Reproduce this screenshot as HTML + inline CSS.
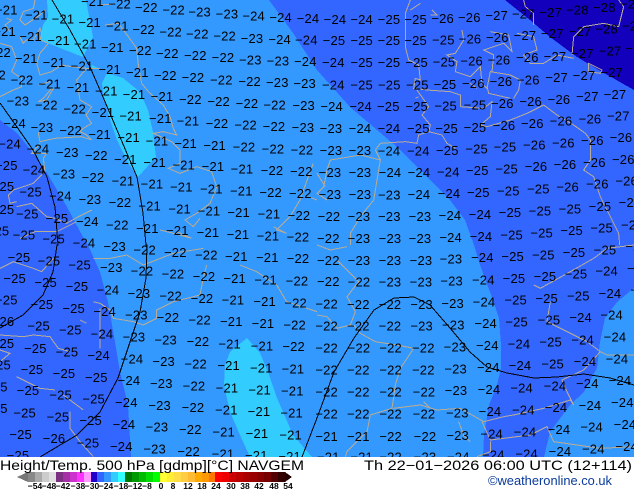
<!DOCTYPE html>
<html><head><meta charset="utf-8"><style>
html,body{margin:0;padding:0;background:#fff}
svg{display:block}
.l text{font:39px "Liberation Sans",sans-serif;letter-spacing:.6px;fill:#000}
.c{fill:none;stroke:#b8ac96;stroke-width:3;shape-rendering:crispEdges}
.k{fill:none;stroke:#000;stroke-width:1;shape-rendering:crispEdges}
.t{font-family:"Liberation Sans",sans-serif;fill:#000}
.b{font:bold 8.5px "Liberation Sans",sans-serif;fill:#000;text-anchor:middle}
</style></head><body>
<svg width="634" height="490" viewBox="0 0 634 490" xmlns="http://www.w3.org/2000/svg">
<defs><clipPath id="m"><rect width="634" height="457"/></clipPath></defs>
<rect width="634" height="490" fill="#fff"/>
<g clip-path="url(#m)">
<rect width="634" height="457" fill="#3399ff"/>
<g shape-rendering="crispEdges">
<polygon fill="#3366ff" points="269,0 293,33 317,70 350,107 397,147 427,177 450,200 465,220 474,245 480,265 490,292 499,318 501,345 501,368 497,385 489,405 484,435 483,457 544,457 550,432 570,405 584,392 597,368 600,342 605,318 617,302 634,288 634,0"/>
<polygon fill="#3366ff" points="0,120 17,133 33,153 47,173 67,207 83,237 88,245 100,272 108,302 115,342 120,372 128,405 131,457 0,457"/>
<polygon fill="#1200bd" points="505,0 530,20 550,37 577,57 604,73 634,90 634,0"/>
<polygon fill="#33ccff" points="47,0 86,0 93,37 83,57 60,48 40,40 43,25 48,17"/>
<polygon fill="#33ccff" points="92,65 100,69 90,69"/>
<polygon fill="#33ccff" points="107,73 123,78 140,92 148,110 153,132 156,157 138,177 128,163 117,140 110,120 103,93 102,83"/>
<polygon fill="#33ccff" points="247,338 260,353 268,372 277,398 293,435 312,457 250,457 240,435 230,412 224,385 225,365 230,352"/>
</g>
<g transform="scale(.33333)">
<path class="c" d="M105,0L100,25L70,35L60,60L75,75L120,45L135,30M20,55L35,60L15,75L30,95M60,110L70,130L80,120L100,120L120,85L125,100L120,120L145,130L120,160L110,190L120,225L155,215L185,195L215,200L260,205L300,205M260,205L230,240L240,300L275,320L258,345L275,370L250,385L240,395L260,405L275,420L245,410L165,415L120,425L115,400L125,385M120,430L95,460L140,460L130,475L135,515L100,550L40,570L25,585L30,610L50,605M50,620L95,610L140,650L165,655L200,670L235,650L275,630M60,715L105,695L170,695L230,665M300,15L345,12M315,75L355,70L385,110L410,145L415,195L425,250L445,275L490,315L510,350L520,385L530,405L490,395L460,400L515,425L540,450L540,490L505,505L540,520L590,500L635,515L650,560L630,610L590,640L555,660L580,680L600,655M530,695L575,715L520,700L480,690M0,130L35,140L50,180L35,215L65,235L65,260L40,270L0,290M115,255L150,245M155,265L130,295L115,305L140,300L160,265M940,490L925,530L900,600L870,650L830,690L860,700L820,680M951,600L925,590"/>
</g>
<g transform="translate(317,0) scale(.33333)">
<path class="c" d="M280,0L265,40L265,140L275,180L305,195L310,240L295,235L290,265L330,270L400,275L430,285L430,320L500,325L525,305L520,350L490,375L510,380L580,360L630,340L680,315L720,345L770,375L805,400L820,420L820,480L800,510L830,530L850,590L880,650L905,700L908,735M300,270L335,320L315,345L340,375L335,395L375,405L390,430L415,445M335,395L305,405L300,430L265,425L190,430L175,450L190,480L130,465L40,480L30,510L20,560L0,580L30,600M190,480L180,540L170,600L130,650L100,700L100,735M0,520L25,560M620,0L625,20L650,40L650,75M435,90L440,120L415,160L390,165L420,185L415,215L460,230L490,200L495,250L510,265L520,215L580,225L610,240L605,270L590,295M510,260L515,280L580,295M460,250L480,265M345,30L360,45L340,45M280,30L310,10M305,290L295,295M520,95L575,105L585,155L560,130L500,150L530,165L525,215M600,100L650,110L660,150L620,165L640,190L680,190L720,165L770,175M765,165L770,110L800,80L860,70L905,80L920,20L905,0M815,190L855,210L850,220L815,215Z"/>
</g>
<g transform="translate(0,245) scale(.33333)">
<path class="c" d="M0,70L40,50L100,70L125,80L165,35M280,40L330,40L380,30L430,60L520,25L610,10M620,60L610,100L600,150L520,170L470,195L470,220L430,240L400,230L340,220L330,195L300,175L280,170M300,190L300,310M0,270L70,275L100,270L150,275L175,310L210,320M0,315L30,325L0,350M50,395L120,430L165,435M190,450L250,495M210,500L210,550L240,590L280,635M720,60L770,80L830,120L860,170L951,200M240,225L260,235"/>
</g>
<g transform="translate(317,245) scale(.33333)">
<path class="c" d="M0,0L40,15L90,5M60,45L85,70L125,110L90,155L115,200L100,240L60,250L30,215L0,210M110,240L130,265L175,290L240,300L290,310L250,370L235,420L225,490L160,510L150,560L90,620L85,635M230,490L310,480L360,495L430,490L500,530L560,515L590,510L680,490L760,465L770,480L750,440L735,405L800,375L850,320L870,330L951,330M650,120L670,130L760,80L830,40L870,10L951,0M700,170L690,230L750,260L810,290L850,320M320,470L340,490M425,530L440,570L460,590M495,530L520,585L640,570L690,545L710,590L780,600L850,610L951,605M520,590L520,620L480,635"/>
</g>
<path class="k" d="M52,0L70,30L90,67L103,97L120,137L137,177L143,213L146,245L147,245L146,278L140,312L128,348L118,378L100,412L77,435L40,457"/>
<path class="k" d="M0,103L17,127L33,150L47,177L55,207L58,245L57,245L53,272L43,295L23,315L0,328"/>
<path class="k" d="M302,457L317,418L334,372L354,338L374,310L394,298L414,297L430,305L450,328L470,352L487,367L507,373L534,378L557,377L584,374L610,378L634,385"/>
<g class="l" transform="translate(0,4.5) scale(.33333)">
<text x="243" y="5">−21</text><text x="325" y="12">−22</text><text x="405" y="22">−22</text><text x="487" y="30">−22</text><text x="565" y="36">−23</text><text x="647" y="42">−23</text><text x="727" y="48">−24</text><text x="808" y="52">−24</text><text x="890" y="55">−24</text>
<text x="971" y="58">−24</text><text x="1051" y="58">−24</text><text x="1133" y="58">−25</text><text x="1213" y="58">−25</text><text x="1294" y="55">−26</text><text x="1374" y="52">−26</text><text x="1456" y="47">−27</text><text x="1536" y="42">−27</text><text x="1618" y="37">−27</text><text x="1698" y="30">−28</text><text x="1779" y="22">−28</text><text x="1860" y="12">−28</text>
<text x="-15" y="30">−21</text><text x="75" y="45">−21</text><text x="155" y="57">−21</text><text x="235" y="68">−21</text><text x="318" y="78">−21</text><text x="397" y="88">−22</text><text x="478" y="96">−22</text><text x="558" y="102">−22</text><text x="640" y="108">−22</text><text x="722" y="115">−23</text><text x="805" y="118">−24</text><text x="885" y="120">−24</text>
<text x="968" y="122">−25</text><text x="1051" y="122">−25</text><text x="1133" y="122">−25</text><text x="1213" y="122">−25</text><text x="1296" y="120">−25</text><text x="1376" y="117">−26</text><text x="1458" y="112">−26</text><text x="1541" y="107">−27</text><text x="1623" y="100">−27</text><text x="1706" y="95">−27</text><text x="1786" y="87">−28</text><text x="1866" y="78">−28</text>
<text x="-20" y="95">−21</text><text x="58" y="110">−21</text><text x="142" y="122">−21</text><text x="222" y="132">−21</text><text x="303" y="143">−21</text><text x="387" y="152">−22</text><text x="468" y="160">−22</text><text x="552" y="167">−22</text><text x="635" y="173">−22</text><text x="717" y="180">−23</text><text x="800" y="183">−23</text><text x="882" y="185">−24</text>
<text x="966" y="188">−24</text><text x="1051" y="188">−25</text><text x="1133" y="188">−25</text><text x="1216" y="188">−25</text><text x="1298" y="186">−25</text><text x="1381" y="183">−26</text><text x="1463" y="180">−26</text><text x="1548" y="173">−26</text><text x="1631" y="170">−27</text><text x="1713" y="160">−27</text><text x="1796" y="153">−27</text><text x="1876" y="145">−27</text>
<text x="-35" y="158">−22</text><text x="45" y="175">−21</text><text x="128" y="187">−21</text><text x="212" y="198">−21</text><text x="295" y="208">−21</text><text x="378" y="218">−21</text><text x="462" y="226">−22</text><text x="545" y="233">−22</text><text x="630" y="240">−22</text><text x="715" y="245">−22</text><text x="798" y="248">−23</text><text x="880" y="250">−23</text>
<text x="966" y="255">−24</text><text x="1051" y="255">−25</text><text x="1134" y="255">−25</text><text x="1218" y="255">−25</text><text x="1301" y="253">−25</text><text x="1386" y="250">−26</text><text x="1469" y="245">−26</text><text x="1551" y="240">−26</text><text x="1636" y="233">−27</text><text x="1718" y="226">−27</text><text x="1801" y="218">−27</text>
<text x="-50" y="225">−22</text><text x="32" y="240">−22</text><text x="115" y="252">−21</text><text x="200" y="263">−21</text><text x="285" y="273">−21</text><text x="368" y="283">−21</text><text x="452" y="290">−21</text><text x="537" y="298">−22</text><text x="622" y="305">−22</text><text x="707" y="310">−22</text><text x="790" y="315">−22</text><text x="877" y="317">−23</text>
<text x="961" y="320">−24</text><text x="1048" y="320">−24</text><text x="1131" y="320">−25</text><text x="1216" y="320">−25</text><text x="1303" y="318">−25</text><text x="1391" y="315">−25</text><text x="1473" y="310">−26</text><text x="1558" y="305">−26</text><text x="1643" y="298">−26</text><text x="1728" y="290">−27</text><text x="1811" y="283">−27</text>
<text x="20" y="303">−23</text><text x="105" y="315">−22</text><text x="190" y="327">−22</text><text x="275" y="338">−21</text><text x="358" y="348">−21</text><text x="447" y="355">−21</text><text x="530" y="363">−21</text><text x="617" y="370">−22</text><text x="703" y="375">−22</text><text x="788" y="380">−22</text><text x="875" y="383">−23</text>
<text x="959" y="386">−23</text><text x="1046" y="386">−24</text><text x="1133" y="386">−24</text><text x="1221" y="385">−25</text><text x="1306" y="385">−25</text><text x="1391" y="382">−25</text><text x="1478" y="376">−26</text><text x="1563" y="371">−26</text><text x="1649" y="363">−26</text><text x="1736" y="357">−26</text><text x="1821" y="348">−27</text>
<text x="10" y="370">−24</text><text x="92" y="382">−23</text><text x="178" y="392">−22</text><text x="265" y="403">−21</text><text x="352" y="413">−21</text><text x="437" y="423">−21</text><text x="523" y="430">−21</text><text x="610" y="436">−21</text><text x="698" y="441">−22</text><text x="785" y="447">−22</text><text x="872" y="450">−22</text>
<text x="959" y="452">−23</text><text x="1046" y="452">−23</text><text x="1133" y="453">−24</text><text x="1221" y="453">−24</text><text x="1308" y="451">−25</text><text x="1396" y="447">−25</text><text x="1481" y="441">−25</text><text x="1569" y="435">−26</text><text x="1656" y="429">−26</text><text x="1743" y="422">−26</text><text x="1829" y="413">−26</text>
<text x="-5" y="432">−24</text><text x="80" y="447">−24</text><text x="168" y="458">−23</text><text x="255" y="467">−22</text><text x="342" y="478">−21</text><text x="430" y="488">−21</text><text x="517" y="495">−21</text><text x="605" y="500">−21</text><text x="692" y="507">−21</text><text x="782" y="512">−22</text><text x="870" y="515">−22</text>
<text x="956" y="518">−23</text><text x="1046" y="518">−23</text><text x="1136" y="518">−24</text><text x="1223" y="517">−24</text><text x="1311" y="516">−24</text><text x="1398" y="512">−25</text><text x="1486" y="507">−25</text><text x="1574" y="500">−26</text><text x="1661" y="494">−26</text><text x="1749" y="487">−26</text><text x="1836" y="478">−26</text>
<text x="-15" y="497">−25</text><text x="68" y="510">−24</text><text x="158" y="522">−23</text><text x="245" y="533">−22</text><text x="335" y="543">−21</text><text x="422" y="552">−21</text><text x="510" y="561">−21</text><text x="600" y="567">−21</text><text x="690" y="573">−21</text><text x="778" y="577">−22</text><text x="867" y="580">−22</text>
<text x="956" y="583">−23</text><text x="1046" y="584">−23</text><text x="1134" y="585">−23</text><text x="1223" y="583">−24</text><text x="1313" y="581">−24</text><text x="1401" y="577">−25</text><text x="1491" y="573">−25</text><text x="1581" y="567">−25</text><text x="1669" y="561">−26</text><text x="1758" y="552">−26</text><text x="1846" y="543">−26</text>
<text x="-25" y="560">−25</text><text x="58" y="576">−25</text><text x="147" y="588">−24</text><text x="236" y="598">−23</text><text x="326" y="608">−22</text><text x="415" y="618">−21</text><text x="505" y="627">−21</text><text x="593" y="633">−21</text><text x="682" y="638">−21</text><text x="773" y="642">−21</text><text x="863" y="647">−22</text>
<text x="953" y="649">−22</text><text x="1043" y="650">−23</text><text x="1134" y="650">−23</text><text x="1226" y="649">−23</text><text x="1316" y="647">−24</text><text x="1406" y="643">−24</text><text x="1496" y="638">−25</text><text x="1586" y="633">−25</text><text x="1676" y="627">−25</text><text x="1766" y="619">−25</text><text x="1856" y="608">−25</text>
<text x="-25" y="628">−25</text><text x="48" y="642">−25</text><text x="137" y="655">−25</text><text x="228" y="665">−24</text><text x="318" y="675">−22</text><text x="408" y="685">−21</text><text x="498" y="692">−21</text><text x="590" y="698">−21</text><text x="680" y="703">−21</text><text x="770" y="708">−21</text><text x="860" y="711">−22</text>
<text x="951" y="715">−22</text><text x="1043" y="715">−23</text><text x="1136" y="715">−23</text><text x="1226" y="715">−23</text><text x="1318" y="712">−24</text><text x="1409" y="709">−24</text><text x="1501" y="705">−25</text><text x="1591" y="699">−25</text><text x="1681" y="692">−25</text><text x="1771" y="684">−25</text><text x="1863" y="675">−25</text>
<text x="-40" y="693">−25</text><text x="38" y="705">−25</text><text x="127" y="717">−25</text><text x="218" y="729">−24</text><text x="310" y="740">−23</text><text x="400" y="750">−22</text><text x="492" y="757">−22</text><text x="585" y="765">−22</text><text x="675" y="770">−21</text><text x="768" y="773">−21</text><text x="860" y="776">−22</text>
<text x="951" y="781">−22</text><text x="1043" y="781">−23</text><text x="1136" y="781">−23</text><text x="1229" y="781">−23</text><text x="1319" y="777">−23</text><text x="1413" y="773">−24</text><text x="1504" y="770">−25</text><text x="1596" y="765">−25</text><text x="1688" y="757">−25</text><text x="1781" y="750">−25</text><text x="1876" y="740">−25</text>
<text x="23" y="772">−25</text><text x="113" y="783">−25</text><text x="205" y="795">−25</text><text x="300" y="803">−23</text><text x="392" y="813">−22</text><text x="485" y="822">−22</text><text x="578" y="830">−22</text><text x="670" y="835">−21</text><text x="763" y="840">−21</text><text x="857" y="843">−22</text>
<text x="951" y="845">−22</text><text x="1043" y="846">−22</text><text x="1136" y="846">−23</text><text x="1229" y="846">−23</text><text x="1321" y="843">−23</text><text x="1416" y="840">−24</text><text x="1508" y="835">−25</text><text x="1601" y="830">−25</text><text x="1694" y="822">−25</text><text x="1786" y="813">−24</text><text x="1881" y="805">−24</text>
<text x="10" y="835">−25</text><text x="103" y="848">−25</text><text x="197" y="860">−25</text><text x="290" y="870">−24</text><text x="383" y="880">−23</text><text x="478" y="888">−22</text><text x="572" y="895">−22</text><text x="665" y="900">−21</text><text x="760" y="905">−21</text><text x="853" y="909">−22</text>
<text x="946" y="912">−22</text><text x="1041" y="913">−22</text><text x="1136" y="913">−22</text><text x="1231" y="913">−23</text><text x="1324" y="910">−23</text><text x="1418" y="906">−24</text><text x="1513" y="900">−25</text><text x="1606" y="895">−25</text><text x="1701" y="888">−25</text><text x="1796" y="880">−24</text><text x="1891" y="870">−24</text>
<text x="-15" y="900">−25</text><text x="92" y="913">−25</text><text x="187" y="925">−25</text><text x="280" y="935">−24</text><text x="375" y="945">−23</text><text x="470" y="953">−22</text><text x="565" y="960">−22</text><text x="660" y="965">−21</text><text x="755" y="971">−21</text><text x="850" y="975">−22</text>
<text x="946" y="978">−22</text><text x="1041" y="978">−22</text><text x="1136" y="978">−22</text><text x="1231" y="978">−23</text><text x="1326" y="975">−23</text><text x="1423" y="971">−24</text><text x="1516" y="966">−25</text><text x="1613" y="960">−25</text><text x="1708" y="953">−24</text><text x="1801" y="945">−24</text>
<text x="-25" y="965">−26</text><text x="82" y="978">−25</text><text x="177" y="990">−25</text><text x="272" y="1002">−24</text><text x="368" y="1011">−23</text><text x="463" y="1020">−23</text><text x="560" y="1025">−22</text><text x="655" y="1032">−21</text><text x="752" y="1038">−21</text><text x="847" y="1040">−22</text>
<text x="946" y="1044">−22</text><text x="1043" y="1044">−22</text><text x="1138" y="1044">−22</text><text x="1236" y="1044">−22</text><text x="1331" y="1041">−23</text><text x="1428" y="1037">−24</text><text x="1523" y="1032">−24</text><text x="1618" y="1026">−25</text><text x="1714" y="1020">−24</text><text x="1811" y="1011">−24</text>
<text x="-25" y="1030">−25</text><text x="72" y="1045">−25</text><text x="167" y="1056">−25</text><text x="262" y="1066">−24</text><text x="362" y="1077">−24</text><text x="457" y="1085">−23</text><text x="553" y="1092">−22</text><text x="652" y="1097">−21</text><text x="750" y="1104">−21</text><text x="845" y="1107">−21</text>
<text x="946" y="1110">−22</text><text x="1041" y="1110">−22</text><text x="1138" y="1110">−22</text><text x="1236" y="1110">−22</text><text x="1333" y="1107">−23</text><text x="1431" y="1103">−24</text><text x="1526" y="1097">−24</text><text x="1624" y="1092">−25</text><text x="1721" y="1085">−24</text><text x="1817" y="1077">−24</text>
<text x="-35" y="1095">−25</text><text x="62" y="1109">−25</text><text x="158" y="1121">−25</text><text x="255" y="1132">−25</text><text x="353" y="1142">−24</text><text x="450" y="1151">−23</text><text x="548" y="1158">−22</text><text x="647" y="1164">−21</text><text x="745" y="1170">−21</text><text x="843" y="1173">−21</text>
<text x="946" y="1176">−22</text><text x="1041" y="1176">−22</text><text x="1138" y="1176">−22</text><text x="1238" y="1176">−22</text><text x="1334" y="1172">−23</text><text x="1433" y="1169">−24</text><text x="1531" y="1164">−24</text><text x="1631" y="1158">−24</text><text x="1728" y="1151">−24</text><text x="1826" y="1142">−24</text>
<text x="-45" y="1161">−25</text><text x="50" y="1172">−25</text><text x="148" y="1185">−25</text><text x="247" y="1197">−25</text><text x="345" y="1207">−24</text><text x="445" y="1216">−23</text><text x="545" y="1223">−22</text><text x="645" y="1230">−21</text><text x="743" y="1235">−21</text><text x="841" y="1239">−21</text>
<text x="946" y="1242">−22</text><text x="1041" y="1242">−22</text><text x="1138" y="1242">−22</text><text x="1238" y="1242">−22</text><text x="1338" y="1239">−23</text><text x="1436" y="1235">−24</text><text x="1536" y="1230">−24</text><text x="1634" y="1223">−24</text><text x="1736" y="1216">−24</text><text x="1833" y="1207">−24</text>
<text x="-45" y="1225">−25</text><text x="40" y="1239">−25</text><text x="140" y="1251">−25</text><text x="238" y="1262">−25</text><text x="338" y="1273">−24</text><text x="437" y="1281">−23</text><text x="537" y="1289">−22</text><text x="637" y="1296">−21</text><text x="737" y="1301">−21</text><text x="838" y="1305">−21</text>
<text x="946" y="1309">−21</text><text x="1041" y="1309">−21</text><text x="1138" y="1309">−22</text><text x="1241" y="1309">−22</text><text x="1339" y="1306">−23</text><text x="1441" y="1302">−24</text><text x="1541" y="1296">−24</text><text x="1643" y="1289">−24</text><text x="1741" y="1281">−24</text><text x="1841" y="1273">−24</text>
<text x="28" y="1304">−25</text><text x="128" y="1316">−26</text><text x="230" y="1329">−25</text><text x="330" y="1339">−24</text><text x="430" y="1347">−23</text><text x="532" y="1355">−22</text><text x="635" y="1362">−21</text><text x="735" y="1367">−21</text><text x="835" y="1370">−21</text>
<text x="951" y="1371">−21</text><text x="1051" y="1371">−21</text><text x="1138" y="1371">−22</text><text x="1241" y="1371">−23</text><text x="1341" y="1371">−24</text><text x="1446" y="1365">−24</text><text x="1546" y="1362">−24</text><text x="1646" y="1355">−24</text><text x="1746" y="1347">−24</text><text x="1846" y="1339">−24</text>
<text x="20" y="1367">−25</text>
</g>
</g>
<g shape-rendering="crispEdges">
<polygon points="17,477 28,472 28,482" fill="#777"/>
<rect x="28" y="472" width="7" height="10" fill="#888"/><rect x="35" y="472" width="7" height="10" fill="#aaa"/><rect x="42" y="472" width="7" height="10" fill="#ccc"/><rect x="49" y="472" width="7" height="10" fill="#e0e0e0"/><rect x="56" y="472" width="7" height="10" fill="#7d2f82"/><rect x="63" y="472" width="7" height="10" fill="#a52fa5"/><rect x="70" y="472" width="7" height="10" fill="#cc33cc"/><rect x="77" y="472" width="7" height="10" fill="#ff33ff"/><rect x="84" y="472" width="7" height="10" fill="#ff99ff"/><rect x="91" y="472" width="6" height="10" fill="#2200cc"/><rect x="97" y="472" width="7" height="10" fill="#3366ff"/><rect x="104" y="472" width="7" height="10" fill="#3399ff"/><rect x="111" y="472" width="7" height="10" fill="#33ccff"/><rect x="118" y="472" width="7" height="10" fill="#33ffff"/><rect x="125" y="472" width="7" height="10" fill="#007700"/><rect x="132" y="472" width="7" height="10" fill="#009900"/><rect x="139" y="472" width="7" height="10" fill="#00bb00"/><rect x="146" y="472" width="7" height="10" fill="#00dd00"/><rect x="153" y="472" width="7" height="10" fill="#00ff00"/><rect x="160" y="472" width="7" height="10" fill="#ffff33"/><rect x="167" y="472" width="7" height="10" fill="#ffee33"/><rect x="174" y="472" width="7" height="10" fill="#ffdd44"/><rect x="181" y="472" width="7" height="10" fill="#ffcc44"/><rect x="188" y="472" width="7" height="10" fill="#ffbb33"/><rect x="195" y="472" width="7" height="10" fill="#ffaa00"/><rect x="202" y="472" width="7" height="10" fill="#ff9900"/><rect x="209" y="472" width="6" height="10" fill="#ff7700"/><rect x="215" y="472" width="7" height="10" fill="#ff0000"/><rect x="222" y="472" width="7" height="10" fill="#ee0000"/><rect x="229" y="472" width="7" height="10" fill="#cc0000"/><rect x="236" y="472" width="7" height="10" fill="#bb0000"/><rect x="243" y="472" width="7" height="10" fill="#aa0000"/><rect x="250" y="472" width="7" height="10" fill="#990000"/><rect x="257" y="472" width="7" height="10" fill="#880000"/><rect x="264" y="472" width="7" height="10" fill="#770000"/><rect x="271" y="472" width="7" height="10" fill="#550000"/><rect x="278" y="472" width="7" height="10" fill="#330000"/>
<polygon points="285,472 292,477 285,482" fill="#220000"/>
</g>
<text class="t" x="0" y="470" font-size="14" textLength="304" lengthAdjust="spacingAndGlyphs">Height/Temp. 500 hPa [gdmp][°C] NAVGEM</text>
<text class="t" x="364" y="470" font-size="14" textLength="268" lengthAdjust="spacingAndGlyphs">Th 22−01−2026 06:00 UTC (12+114)</text>
<text class="t" x="488" y="485" font-size="12.5" textLength="124" lengthAdjust="spacingAndGlyphs" style="fill:#0a3a9a">©weatheronline.co.uk</text>
<g class="b">
<text x="35" y="489">−54</text><text x="49" y="489">−48</text><text x="63" y="489">−42</text><text x="78" y="489">−38</text><text x="92" y="489">−30</text><text x="106" y="489">−24</text><text x="121" y="489">−18</text><text x="135" y="489">−12</text><text x="147" y="489">−8</text><text x="161" y="489">0</text><text x="173" y="489">8</text><text x="188" y="489">12</text><text x="202" y="489">18</text><text x="216" y="489">24</text><text x="231" y="489">30</text><text x="245" y="489">38</text><text x="259" y="489">42</text><text x="274" y="489">48</text><text x="288" y="489">54</text>
</g>
</svg>
</body></html>
